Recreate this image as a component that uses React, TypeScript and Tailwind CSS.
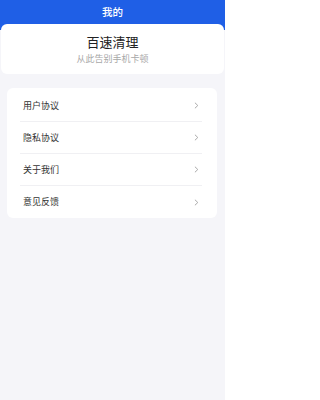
import React from "react";

const items = ["用户协议", "隐私协议", "关于我们", "意见反馈"];

function Chevron() {
  return (
    <svg width="5" height="7" viewBox="0 0 5 7" fill="none" className="shrink-0">
      <path d="M1.2 1 L3.8 3.5 L1.2 6" stroke="#a0a0a0" strokeWidth="0.9" strokeLinecap="round" strokeLinejoin="round" />
    </svg>
  );
}

export default function App() {
  return (
    <div
      className="w-[225px] h-[400px] bg-[#f5f5f9] overflow-hidden"
      style={{ fontFamily: '"Noto Sans CJK SC", "Noto Sans", sans-serif' }}
    >
      {/* Header */}
      <div className="h-[30px] bg-[#1f5fe6]">
        <div className="h-[24px] flex items-center justify-center text-white text-[10.5px] font-medium">
          我的
        </div>
      </div>

      {/* App card */}
      <div className="-mt-[6px] mx-[1px] h-[50px] bg-white rounded-[6px] flex flex-col items-center justify-center">
        <div className="text-[13px] leading-[16px] text-[#222]">百速清理</div>
        <div className="mt-[3px] text-[9px] leading-[12px] text-[#a8a8a8]">从此告别手机卡顿</div>
      </div>

      {/* Menu */}
      <div className="mt-[14px] mx-[7px] w-[210px] bg-white rounded-[6px] pt-[2px]">
        <div className="ml-[13px] mr-[15px]">
          {items.map((label, idx) => (
            <div
              key={label}
              className={`h-[32px] flex items-center justify-between pl-[3px] pr-[3px] ${
                idx < items.length - 1 ? "border-b border-[#f0f0f3]" : ""
              }`}
            >
              <span className="text-[9px] text-[#333]">{label}</span>
              <Chevron />
            </div>
          ))}
        </div>
      </div>
    </div>
  );
}
